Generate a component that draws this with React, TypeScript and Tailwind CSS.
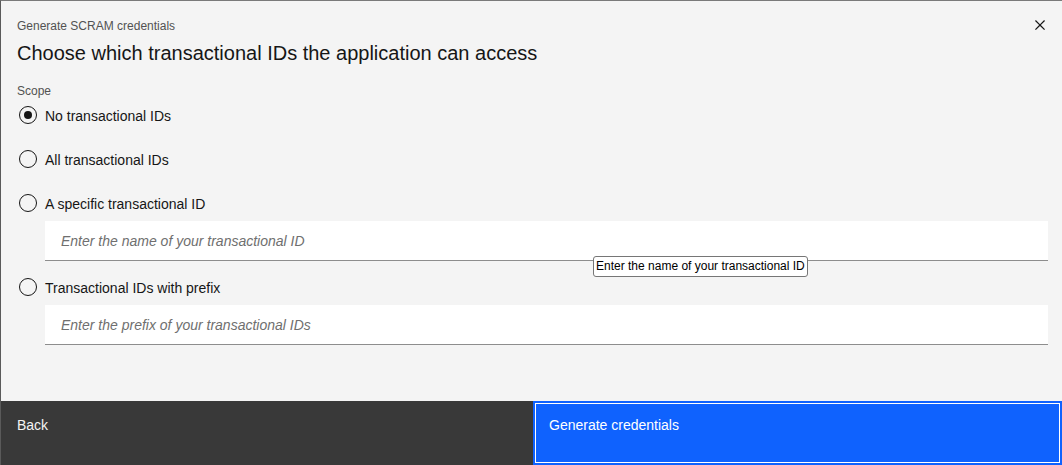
import { useState } from "react";

const options = [
  { id: "none", label: "No transactional IDs" },
  { id: "all", label: "All transactional IDs" },
  { id: "specific", label: "A specific transactional ID", placeholder: "Enter the name of your transactional ID" },
  { id: "prefix", label: "Transactional IDs with prefix", placeholder: "Enter the prefix of your transactional IDs" },
];

function Radio({ checked }: { checked: boolean }) {
  return (
    <span className="ml-[2px] flex h-[18px] w-[18px] shrink-0 items-center justify-center rounded-full border border-[#161616]">
      {checked && <span className="h-[8px] w-[8px] rounded-full bg-[#161616]" />}
    </span>
  );
}

export default function App() {
  const [scope, setScope] = useState("none");

  return (
    <div
      className="relative flex h-[465px] w-full flex-col overflow-hidden border-t border-l border-t-[#7a7a7a] border-l-[#5a5a5a] bg-[#f4f4f4] text-[#161616]"
      style={{ fontFamily: '"Liberation Sans", Arial, sans-serif' }}
    >
      {/* Header */}
      <div className="relative px-4 pt-[17px]">
        <p className="text-[12px] leading-[16px] text-[#525252]">Generate SCRAM credentials</p>
        <h2 className="mt-[5px] text-[20px] leading-[28px] text-[#161616]">
          Choose which transactional IDs the application can access
        </h2>
        <button className="absolute right-[12px] top-[14px] flex h-[20px] w-[20px] items-center justify-center text-[#161616]">
          <svg width="20" height="20" viewBox="0 0 32 32" fill="currentColor">
            <path d="M24 9.4L22.6 8 16 14.6 9.4 8 8 9.4 14.6 16 8 22.6 9.4 24 16 17.4 22.6 24 24 22.6 17.4 16 24 9.4z" />
          </svg>
        </button>
      </div>

      {/* Body */}
      <div className="flex-1 pl-4 pr-[14px] pt-4">
        <p className="text-[12px] leading-[16px] text-[#525252]">Scope</p>
        <div className="mt-[7px] flex flex-col">
          {options.map((opt, i) => (
            <div key={opt.id} className={i === 0 ? "" : i === 3 ? "mt-[17px]" : "mt-[26px]"}>
              <label
                className="flex h-[18px] cursor-pointer items-center gap-[8px] text-[14px] leading-[18px]"
                onClick={() => setScope(opt.id)}
              >
                <Radio checked={scope === opt.id} />
                <span className="mt-[2px]">{opt.label}</span>
              </label>
              {opt.placeholder && (
                <input
                  type="text"
                  placeholder={opt.placeholder}
                  className="ml-[28px] mt-[9px] block h-[40px] w-[calc(100%-28px)] border-b border-[#8d8d8d] bg-white px-4 pt-[1px] text-[14px] italic text-[#161616] outline-none placeholder:text-[#6f6f6f]"
                />
              )}
            </div>
          ))}
        </div>
      </div>

      {/* Native-looking tooltip */}
      <div className="absolute left-[592px] top-[255px] rounded-[3px] border border-[#767676] bg-white px-[2px] py-[2px] text-[12px] leading-[15px] text-black">
        Enter the name of your transactional ID
      </div>

      {/* Footer */}
      <div className="flex h-[64px]">
        <button className="flex h-full w-[532px] shrink-0 items-start bg-[#393939] px-4 pt-[15px] text-left text-[14px] leading-[18px] text-[#f4f4f4]">
          Back
        </button>
        <button className="flex h-full flex-1 items-start border-2 border-[#0f62fe] bg-[#0f62fe] px-[14px] pt-[13px] text-left text-[14px] leading-[18px] text-white shadow-[inset_0_0_0_1px_#ffffff]">
          Generate credentials
        </button>
      </div>
    </div>
  );
}
